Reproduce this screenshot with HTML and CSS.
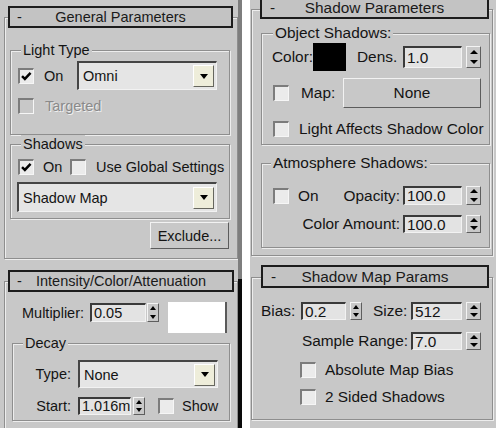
FILE: index.html
```html
<!DOCTYPE html>
<html>
<head>
<meta charset="utf-8">
<title>Light Parameters</title>
<link rel="stylesheet" href="styles.css">
</head>
<body>
<div class="page">
  <div class="col col-left">
    <section class="rollout ro-general">
      <div class="rhead rhead-general"><span class="minus">-</span><span class="rtitle">General Parameters</span></div>
      <div class="group g-light">
        <div class="glabel">Light Type</div>
        <div class="row row-lt">
          <span class="cb"><svg viewBox="0 0 16 16" width="13" height="13"><path d="M2.5 7.5 L6 11 L13 3.5" fill="none" stroke="#000" stroke-width="3"/></svg></span>
          <span class="txt t-on1">On</span>
          <div class="dd dd-omni"><span class="dd-val">Omni</span><span class="dd-btn"></span></div>
        </div>
        <div class="row row-target">
          <span class="cb cb-disabled"></span>
          <span class="txt t-target">Targeted</span>
        </div>
      </div>
      <div class="group g-shadows">
        <div class="glabel">Shadows</div>
        <div class="row row-sh">
          <span class="cb"><svg viewBox="0 0 16 16" width="13" height="13"><path d="M2.5 7.5 L6 11 L13 3.5" fill="none" stroke="#000" stroke-width="3"/></svg></span>
          <span class="txt t-on2">On</span>
          <span class="cb cb-2"></span>
          <span class="txt t-global">Use Global Settings</span>
        </div>
        <div class="dd dd-smap"><span class="dd-val">Shadow Map</span><span class="dd-btn"></span></div>
      </div>
      <div class="btn btn-exclude">Exclude...</div>
    </section>

    <section class="rollout ro-intensity">
      <div class="rhead rhead-intensity"><span class="minus">-</span><span class="rtitle">Intensity/Color/Attenuation</span></div>
      <div class="row row-mult">
        <span class="txt lbl-mult">Multiplier:</span>
        <span class="field f-mult">0.05</span>
        <span class="spin sp-mult"><span class="up"></span><span class="down"></span></span>
        <span class="swatch sw-white"></span>
      </div>
      <div class="group g-decay">
        <div class="glabel">Decay</div>
        <div class="row row-type">
          <span class="txt lbl-r lbl-decay">Type:</span>
          <div class="dd dd-type"><span class="dd-val">None</span><span class="dd-btn"></span></div>
        </div>
        <div class="row row-start">
          <span class="txt lbl-r lbl-decay">Start:</span>
          <span class="field f-start">1.016m</span>
          <span class="spin sp-start"><span class="up"></span><span class="down"></span></span>
          <span class="cb cb-show"></span>
          <span class="txt t-show">Show</span>
        </div>
      </div>
    </section>
  </div>
  <div class="edge"></div>
  <div class="gap"></div>
  <div class="col col-right">
    <section class="rollout ro-shadow">
      <div class="rhead rhead-r1"><span class="minus">-</span><span class="rtitle">Shadow Parameters</span></div>
      <div class="group g-object">
        <div class="glabel">Object Shadows:</div>
        <div class="row row-color">
          <span class="txt lbl-color">Color:</span>
          <span class="swatch sw-black"></span>
          <span class="txt lbl-dens">Dens.</span>
          <span class="field f-wide">1.0</span>
          <span class="spin sp-r"><span class="up"></span><span class="down"></span></span>
        </div>
        <div class="row row-map">
          <span class="cb cb-r"></span>
          <span class="txt lbl-map">Map:</span>
          <div class="btn btn-none">None</div>
        </div>
        <div class="row row-affect">
          <span class="cb cb-r"></span>
          <span class="txt t-affect">Light Affects Shadow Color</span>
        </div>
      </div>
      <div class="group g-atmos">
        <div class="glabel">Atmosphere Shadows:</div>
        <div class="row row-atm1">
          <span class="cb cb-r"></span>
          <span class="txt t-on3">On</span>
          <span class="txt lbl-fill">Opacity:</span>
          <span class="field f-wide">100.0</span>
          <span class="spin sp-r"><span class="up"></span><span class="down"></span></span>
        </div>
        <div class="row row-atm2">
          <span class="txt lbl-fill">Color Amount:</span>
          <span class="field f-wide">100.0</span>
          <span class="spin sp-r"><span class="up"></span><span class="down"></span></span>
        </div>
      </div>
    </section>

    <section class="rollout ro-smap">
      <div class="rhead rhead-r2"><span class="minus">-</span><span class="rtitle">Shadow Map Params</span></div>
      <div class="row row-bias">
        <span class="txt lbl-bias">Bias:</span>
        <span class="field f-bias">0.2</span>
        <span class="spin sp-bias"><span class="up"></span><span class="down"></span></span>
        <span class="txt lbl-size">Size:</span>
        <span class="field f-size">512</span>
        <span class="spin sp-r"><span class="up"></span><span class="down"></span></span>
      </div>
      <div class="row row-range">
        <span class="txt lbl-fill">Sample Range:</span>
        <span class="field f-size">7.0</span>
        <span class="spin sp-r"><span class="up"></span><span class="down"></span></span>
      </div>
      <div class="row row-abs">
        <span class="cb cb-sm"></span>
        <span class="txt t-chk">Absolute Map Bias</span>
      </div>
      <div class="row row-2side">
        <span class="cb cb-sm"></span>
        <span class="txt t-chk">2 Sided Shadows</span>
      </div>
    </section>
  </div>
</div>
</body>
</html>
```
FILE: styles.css
```css
* { box-sizing: border-box; margin: 0; padding: 0; }
html, body { width: 496px; height: 428px; overflow: hidden; background: #ffffff; }
body {
  font-family: "Liberation Sans", Arial, sans-serif;
  color: #141414;
  line-height: 18px;
}
.page { display: flex; height: 428px; }
.col { background: #c8c8c8; height: 428px; overflow: hidden; }
.col-left { width: 238px; font-size: 14.5px; }
.col-right { width: 246px; font-size: 15.4px; }
.edge { width: 4px; background: linear-gradient(#7e7e7e 0, #7e7e7e 279px, #0a0a0a 279px); }
.gap { width: 8px; background: #ffffff; }

/* rollouts */
.rollout {
  border: 1px solid #8e8e8e;
  box-shadow: inset 1px 1px 0 #ededed, 1px 1px 0 #ededed;
}
.ro-general { margin: 17px 0 0 4px; height: 242px; }
.ro-intensity { margin: 22px 0 0 4px; height: 170px; }
.ro-shadow { margin: 9px 3px 0 1px; height: 247px; }
.ro-smap { margin: 21px 3px 0 1px; height: 143px; }

.rhead {
  height: 22px;
  border: 2px solid #1c1c1c;
  background: #c3c3c3;
  display: grid;
  grid-template-columns: 22px minmax(0, 1fr) 22px;
  align-items: center;
  color: #1a1a1a;
}
.rhead-general { margin: -12px 4px 0 3px; }
.rhead-intensity { margin: -12px 3px 0 3px; }
.rhead-r1 { margin: -13px 3px 0 8px; }
.rhead-r2 { margin: -13px 3px 0 9px; height: 23px; }
.minus { padding-left: 7px; }
.rhead-r1 .minus, .rhead-r2 .minus { padding-left: 8px; }
.rtitle { text-align: center; white-space: nowrap; }

/* group boxes */
.group {
  border: 1px solid #8e8e8e;
  box-shadow: inset 1px 1px 0 #ededed, 1px 1px 0 #ededed;
}
.glabel {
  width: max-content;
  height: 18px;
  margin-top: -10px;
  padding: 0 2px;
  background: #c8c8c8;
  white-space: nowrap;
}
.g-light { margin: 22px 0 0 5px; width: 220px; height: 85px; }
.g-shadows { margin: 9px 0 0 5px; width: 220px; height: 75px; }
.g-light .glabel, .g-shadows .glabel { margin-left: 10px; }
.g-decay { margin: 10px 0 0 7px; width: 218px; height: 78px; }
.g-decay .glabel { margin-left: 10px; }
.g-object { margin: 14px 2px 0 9px; height: 112px; }
.g-object .glabel { margin-left: 11px; }
.g-atmos { margin: 18px 2px 0 9px; height: 85px; }
.g-atmos .glabel { margin-left: 9px; }

/* rows */
.row { display: flex; align-items: center; white-space: nowrap; }
.txt { flex: none; }
.row-lt { height: 29px; margin-top: 2px; }
.row-lt .cb { margin-left: 7px; }
.t-on1 { margin-left: 10px; }
.dd-omni { margin: 0 12px 0 auto; width: 140px; height: 29px; }
.row-target { height: 18px; margin-top: 7px; }
.row-target .cb { margin-left: 7px; }
.t-target { margin-left: 11px; color: #8a8a8a; text-shadow: 1px 1px 0 #efefef; }

.row-sh { height: 18px; margin-top: 5px; }
.row-sh .cb { margin-left: 7px; }
.t-on2 { margin-left: 9px; width: 20px; }
.cb-2 { margin-left: 5px; }
.t-global { margin-left: 10px; }
.dd-smap { margin: 6px 0 0 6px; width: 200px; height: 30px; }

.btn-exclude { margin: 3px 8px 0 auto; width: 79px; height: 27px; }

.row-mult { height: 31px; margin-top: 10px; align-items: flex-start; }
.lbl-mult { margin: 2px 0 0 17px; width: 68px; }
.f-mult { width: 56px; height: 19px; margin-top: 1px; }
.sp-mult { margin: 1px 0 0 1px; width: 12px; height: 19px; }
.sw-white {
  margin-left: 9px; width: 59px; height: 31px;
  background: #ffffff;
  border-right: 2px solid #5a5a5a;
}

.lbl-r { text-align: right; padding-right: 2px; }
.lbl-decay { width: 60px; }
.row-type { height: 28px; margin-top: 8px; }
.dd-type { margin-left: 5px; width: 140px; height: 28px; }
.row-start { height: 19px; margin-top: 8px; }
.f-start { margin-left: 5px; width: 53px; height: 18px; }
.sp-start { margin-left: 2px; width: 12px; height: 18px; }
.cb-show { margin-left: 13px; width: 17px; height: 17px; }
.t-show { margin-left: 8px; }

.row-color { height: 28px; margin-top: 1px; }
.lbl-color { margin-left: 10px; width: 41px; }
.sw-black { width: 33px; height: 28px; background: #000000; }
.lbl-dens { margin-left: 11px; width: 46px; }
.f-wide { width: 59px; height: 21px; }
.sp-r { margin-left: 4px; width: 15px; height: 21px; }
.row-color .f-wide, .row-color .sp-r { height: 22px; }

.row-map { height: 30px; margin-top: 7px; }
.cb-r { width: 18px; height: 18px; margin-left: 11px; }
.lbl-map { margin-left: 12px; width: 42px; }
.btn-none { width: 138px; height: 30px; }
.row-affect { height: 20px; margin-top: 11px; }
.t-affect { margin-left: 10px; }

.row-atm1 { height: 21px; margin-top: 13px; padding-right: 8px; }
.t-on3 { margin-left: 9px; }
.lbl-fill { flex: 1; text-align: right; padding-right: 3px; }
.row-atm2 { height: 18px; margin-top: 9px; padding-right: 8px; }
.row-atm2 .f-wide, .row-atm2 .sp-r { height: 18px; }
.row-atm1 .f-wide, .row-atm1 .sp-r { height: 19px; }

.row-bias { height: 18px; margin-top: 14px; }
.lbl-bias { margin-left: 9px; width: 40px; }
.f-bias { width: 45px; height: 18px; }
.sp-bias { margin-left: 4px; width: 12px; height: 18px; }
.lbl-size { margin-left: 11px; width: 38px; }
.f-size { width: 51px; height: 18px; }
.row-bias .sp-r, .row-range .sp-r { height: 18px; }
.row-range { height: 18px; margin-top: 12px; padding-right: 11px; }
.row-abs { height: 16px; margin-top: 12px; }
.row-2side { height: 17px; margin-top: 10px; }
.cb-sm { margin-left: 48px; width: 16px; height: 16px; }
.t-chk { margin-left: 9px; }

/* widgets */
.cb {
  flex: none;
  width: 16px; height: 16px;
  background: #ebebeb;
  border-style: solid;
  border-width: 2px 1px 1px 2px;
  border-color: #7c7c7c #f6f6f6 #f6f6f6 #7c7c7c;
  display: flex; align-items: center; justify-content: center;
}
.cb-disabled { background: #c8c8c8; }

.field {
  flex: none;
  display: flex; align-items: center;
  background: #e3e3e3;
  border-style: solid;
  border-width: 2px 1px 1px 2px;
  border-color: #3a3a3a #f2f2f2 #f2f2f2 #3a3a3a;
  padding-left: 2px;
  overflow: hidden;
}

.spin {
  flex: none;
  display: flex; flex-direction: column;
  background: #c8c8c8;
  border: 1px solid;
  border-color: #f4f4f4 #5e5e5e #5e5e5e #f4f4f4;
}
.spin span { flex: 1; display: flex; align-items: center; justify-content: center; }
.spin .up::before {
  content: "";
  border-left: 3px solid transparent;
  border-right: 3px solid transparent;
  border-bottom: 4px solid #000;
}
.spin .down::before {
  content: "";
  border-left: 3px solid transparent;
  border-right: 3px solid transparent;
  border-top: 4px solid #000;
}
.sp-r .up::before { border-left-width: 4px; border-right-width: 4px; }
.sp-r .down::before { border-left-width: 4px; border-right-width: 4px; }

.dd {
  flex: none;
  display: flex; align-items: center;
  background: #e5e5e5;
  border-style: solid;
  border-width: 2px 1px 1px 2px;
  border-color: #454545 #f2f2f2 #f2f2f2 #454545;
  padding: 0 2px 0 4px;
}
.dd-val { flex: 1; }
.dd-btn {
  flex: none;
  width: 21px; height: 22px;
  background: #eeedda;
  border: 1px solid;
  border-color: #ffffff #66665e #66665e #ffffff;
  display: flex; align-items: center; justify-content: center;
}
.dd-btn::before {
  content: "";
  border-left: 4px solid transparent;
  border-right: 4px solid transparent;
  border-top: 5px solid #000;
}

.btn {
  flex: none;
  display: flex; align-items: center; justify-content: center;
  background: #c8c8c8;
  border: 1px solid;
  border-color: #f2f2f2 #5c5c5c #5c5c5c #f2f2f2;
}
.swatch { flex: none; }
```
